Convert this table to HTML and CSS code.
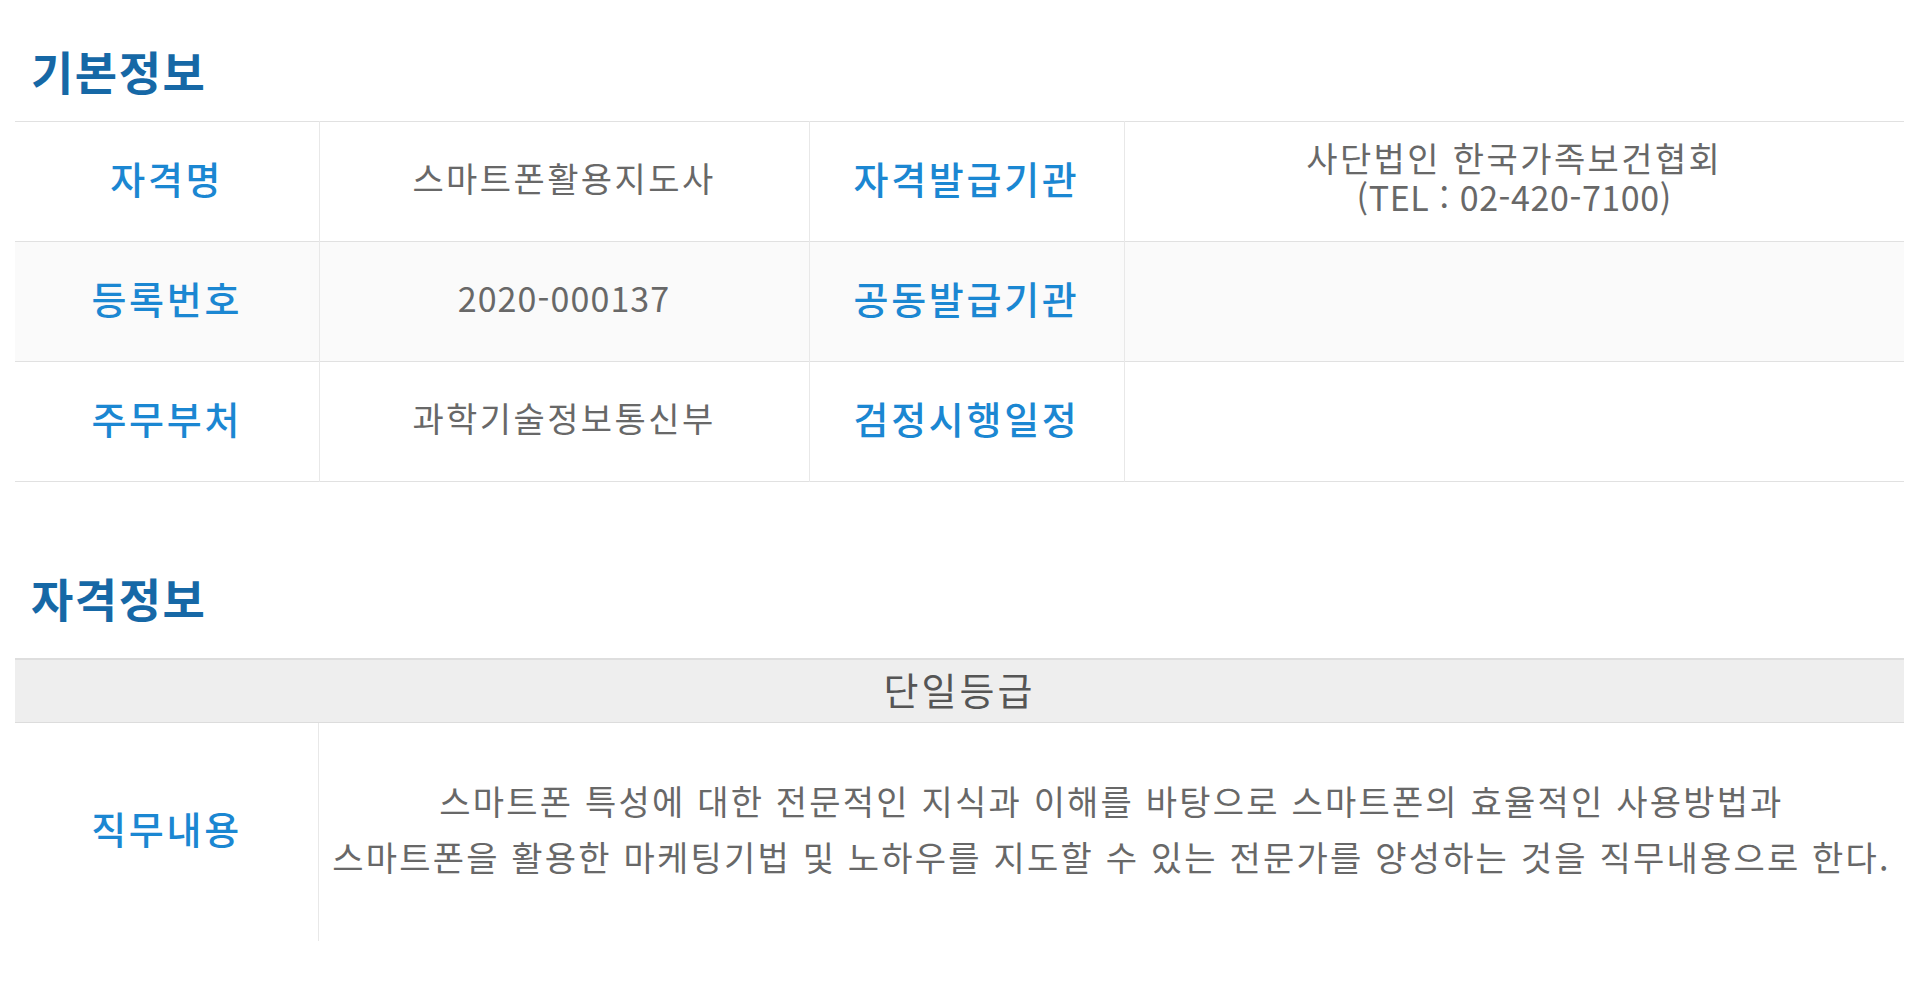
FILE: index.html
```html
<!DOCTYPE html>
<html lang="ko">
<head>
<meta charset="utf-8">
<title>자격정보</title>
<link rel="stylesheet" href="styles.css">
</head>
<body>
<div class="page">
  <h2 class="sec-title first">기본정보</h2>
  <table class="info">
    <colgroup>
      <col class="c1"><col class="c2"><col class="c3"><col class="c4">
    </colgroup>
    <tr>
      <th>자격명</th>
      <td>스마트폰활용지도사</td>
      <th>자격발급기관</th>
      <td class="multi"><span class="line">사단법인 한국가족보건협회</span><span class="line tel">(TEL : 02-420-7100)</span></td>
    </tr>
    <tr class="alt">
      <th>등록번호</th>
      <td class="num">2020-000137</td>
      <th>공동발급기관</th>
      <td></td>
    </tr>
    <tr>
      <th>주무부처</th>
      <td>과학기술정보통신부</td>
      <th>검정시행일정</th>
      <td></td>
    </tr>
  </table>

  <h2 class="sec-title second">자격정보</h2>
  <div class="grade">
    <div class="grade-head">단일등급</div>
    <div class="grade-body">
      <div class="grade-label">직무내용</div>
      <div class="grade-text">스마트폰 특성에 대한 전문적인 지식과 이해를 바탕으로 스마트폰의 효율적인 사용방법과<br>스마트폰을 활용한 마케팅기법 및 노하우를 지도할 수 있는 전문가를 양성하는 것을 직무내용으로 한다.</div>
    </div>
  </div>
</div>
</body>
</html>
```
FILE: styles.css
```css
html, body {
  margin: 0;
  padding: 0;
  background: #ffffff;
}
body {
  font-family: "Noto Sans CJK KR", "Noto Sans", sans-serif;
}
.page {
  padding: 0 16px 0 15px;
}
.sec-title {
  margin: 0;
  font-size: 46px;
  line-height: 46px;
  font-weight: 700;
  letter-spacing: 1.5px;
  color: #1668a6;
  padding-left: 16px;
}
.sec-title.first {
  padding-top: 47px;
  margin-bottom: 28px;
}
.sec-title.second {
  margin-top: 92px;
  margin-bottom: 38px;
}
.info {
  width: 100%;
  border-collapse: collapse;
  table-layout: fixed;
  border-top: 1px solid #e1e1e1;
}
.info .c1 { width: 304px; }
.info .c2 { width: 490px; }
.info .c3 { width: 315px; }
.info .c4 { width: auto; }
.info tr {
  height: 120px;
  border-bottom: 1px solid #e1e1e1;
}
.info tr.alt {
  background: #fafafa;
}
.info th,
.info td {
  padding: 0 6px 7px;
  text-align: center;
  vertical-align: middle;
  border-left: 1px solid #e8e8e8;
}
.info th:first-child {
  border-left: none;
}
.info th {
  font-size: 38px;
  font-weight: 500;
  letter-spacing: 2.7px;
  color: #1b87d2;
  line-height: 1.2;
}
.info td {
  font-size: 34px;
  font-weight: 400;
  letter-spacing: 2.4px;
  color: #686868;
  line-height: 1.2;
}
.info td.num {
  letter-spacing: 1.1px;
}
.info td.multi {
  padding-bottom: 9px;
}
.info td.multi .line {
  display: block;
  height: 39px;
  line-height: 39px;
}
.info td.multi .tel {
  letter-spacing: 0.6px;
}
.grade {
  border-top: 2px solid #dedede;
}
.grade-head {
  height: 63px;
  box-sizing: border-box;
  padding-bottom: 6px;
  background: #eeeeee;
  border-bottom: 1px solid #dcdcdc;
  display: flex;
  align-items: center;
  justify-content: center;
  font-size: 38px;
  letter-spacing: 3px;
  color: #555555;
}
.grade-body {
  display: flex;
  height: 218px;
}
.grade-label {
  width: 304px;
  flex: none;
  box-sizing: border-box;
  padding-bottom: 9px;
  display: flex;
  align-items: center;
  justify-content: center;
  font-size: 38px;
  font-weight: 500;
  letter-spacing: 2.7px;
  color: #1b87d2;
  border-right: 1px solid #e8e8e8;
}
.grade-text {
  flex: 1;
  box-sizing: border-box;
  padding-bottom: 7px;
  display: flex;
  align-items: center;
  justify-content: center;
  text-align: center;
  font-size: 34px;
  line-height: 56px;
  letter-spacing: 2.2px;
  color: #686868;
}
```
